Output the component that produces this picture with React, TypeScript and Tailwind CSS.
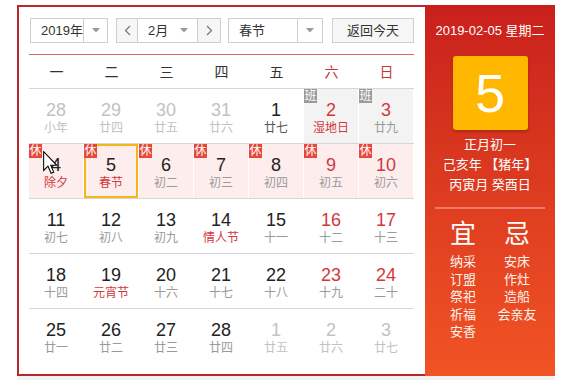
import React from "react";

const FONT = '"Liberation Sans","Noto Sans CJK SC",sans-serif';

type Cell = {
  d: number;
  l: string;
  other?: boolean;
  wk?: boolean;
  fest?: boolean;
  badge?: "休" | "班";
  sel?: boolean;
  darkLunar?: boolean;
  cursor?: boolean;
};

const rows: Cell[][] = [
  [
    { d: 28, l: "小年", other: true },
    { d: 29, l: "廿四", other: true },
    { d: 30, l: "廿五", other: true },
    { d: 31, l: "廿六", other: true },
    { d: 1, l: "廿七", darkLunar: true },
    { d: 2, l: "湿地日", wk: true, fest: true, badge: "班" },
    { d: 3, l: "廿九", wk: true, badge: "班" },
  ],
  [
    { d: 4, l: "除夕", fest: true, badge: "休", cursor: true },
    { d: 5, l: "春节", fest: true, badge: "休", sel: true },
    { d: 6, l: "初二", badge: "休" },
    { d: 7, l: "初三", badge: "休" },
    { d: 8, l: "初四", badge: "休" },
    { d: 9, l: "初五", wk: true, badge: "休" },
    { d: 10, l: "初六", wk: true, badge: "休" },
  ],
  [
    { d: 11, l: "初七" },
    { d: 12, l: "初八" },
    { d: 13, l: "初九" },
    { d: 14, l: "情人节", fest: true },
    { d: 15, l: "十一" },
    { d: 16, l: "十二", wk: true },
    { d: 17, l: "十三", wk: true },
  ],
  [
    { d: 18, l: "十四" },
    { d: 19, l: "元宵节", fest: true },
    { d: 20, l: "十六" },
    { d: 21, l: "十七" },
    { d: 22, l: "十八" },
    { d: 23, l: "十九", wk: true },
    { d: 24, l: "二十", wk: true },
  ],
  [
    { d: 25, l: "廿一" },
    { d: 26, l: "廿二" },
    { d: 27, l: "廿三" },
    { d: 28, l: "廿四" },
    { d: 1, l: "廿五", other: true },
    { d: 2, l: "廿六", other: true },
    { d: 3, l: "廿七", other: true },
  ],
];

function Tri() {
  return (
    <svg width="8" height="5" viewBox="0 0 8 5">
      <path d="M0 0 L8 0 L4 4.5 Z" fill="#9a9a9a" />
    </svg>
  );
}

function Chev({ dir }: { dir: "l" | "r" }) {
  return (
    <svg width="7" height="11" viewBox="0 0 7 11">
      <polyline
        points={dir === "l" ? "6,1 1.5,5.5 6,10" : "1,1 5.5,5.5 1,10"}
        fill="none"
        stroke="#777"
        strokeWidth="1.2"
      />
    </svg>
  );
}

function Cursor() {
  return (
    <svg width="15" height="24" viewBox="0 0 13 21" className="absolute left-[14px] top-[7px]">
      <path
        d="M0.5 0.5 L0.5 17 L4.3 13.3 L7 19.5 L9.3 18.5 L6.7 12.5 L12 12.5 Z"
        fill="#fff"
        stroke="#000"
        strokeWidth="0.9"
        strokeLinejoin="miter"
      />
    </svg>
  );
}

function DayCell({ c, rowPink }: { c: Cell; rowPink: boolean }) {
  let bg = "bg-white";
  if (c.badge === "班") bg = "bg-[#f3f3f3]";
  if (rowPink) bg = "bg-[#fdeded]";
  const numColor = c.other
    ? "text-[#c2c2c2]"
    : c.wk
    ? "text-[#d2373c]"
    : "text-[#222]";
  const lunarColor = c.other
    ? "text-[#c2c2c2]"
    : c.fest
    ? "text-[#d2373c]"
    : c.darkLunar
    ? "text-[#555]"
    : "text-[#9a9a9a]";
  return (
    <div className="h-full pr-[1px]">
      <div
        className={`relative h-full box-border ${bg} ${
          c.sel ? "border-2 border-[#f4b718]" : ""
        }`}
      >
        <div
          className={`flex flex-col items-center ${
            c.sel ? "pt-[9px]" : "pt-[11px]"
          }`}
        >
          <div className={`text-[18px] leading-[20px] ${numColor}`}>{c.d}</div>
          <div className={`text-[12px] leading-[16px] ${lunarColor}`}>{c.l}</div>
        </div>
        {c.badge && (
          <div
            className={`absolute ${c.sel ? "-left-[2px] -top-[2px]" : "left-0 top-0"} w-[13px] h-[14px] flex items-center justify-center text-[12px] leading-[14px] text-white ${
              c.badge === "休" ? "bg-[#e8473b]" : "bg-[#9b9b9b]"
            }`}
          >
            {c.badge}
          </div>
        )}
        {c.cursor && <Cursor />}
      </div>
    </div>
  );
}

export default function App() {
  const weekdays = ["一", "二", "三", "四", "五", "六", "日"];
  return (
    <div
      className="w-[563px] h-[380px] bg-white overflow-hidden"
      style={{ fontFamily: FONT }}
    >
      <div className="pt-[5px] pl-[17px]">
        <div className="flex w-[538px] h-[371px]">
          {/* left calendar */}
          <div className="w-[408px] h-full box-border border-l-2 border-t-2 border-b-2 border-[#b8282a] pt-[11px] pl-[10px]">
            {/* controls */}
            <div className="flex items-center h-[25px] text-[13px] text-[#333] pl-[1px]">
              <div className="flex h-[25px] w-[78px] box-border border border-[#cfcfcf] bg-white">
                <div className="flex-1 flex items-center pl-[10px] border-r border-[#cfcfcf]">
                  2019年
                </div>
                <div className="w-[23px] flex items-center justify-center">
                  <Tri />
                </div>
              </div>
              <div className="ml-[8px] flex h-[25px] w-[105px] box-border border border-[#cfcfcf]">
                <div className="w-[21px] flex items-center justify-center bg-[#f6f6f6] border-r border-[#cfcfcf]">
                  <Chev dir="l" />
                </div>
                <div className="w-[60px] flex items-center pl-[10px] pr-[9px] justify-between border-r border-[#cfcfcf] bg-white">
                  <span>2月</span>
                  <Tri />
                </div>
                <div className="flex-1 flex items-center justify-center bg-[#f6f6f6]">
                  <Chev dir="r" />
                </div>
              </div>
              <div className="ml-[7px] flex h-[25px] w-[95px] box-border border border-[#cfcfcf] bg-white">
                <div className="flex-1 flex items-center pl-[10px] border-r border-[#cfcfcf]">
                  春节
                </div>
                <div className="w-[24px] flex items-center justify-center">
                  <Tri />
                </div>
              </div>
              <div className="ml-[9px] h-[25px] w-[82px] box-border border border-[#cfcfcf] bg-[#f7f7f7] flex items-center justify-center text-[13px] text-[#333]">
                返回今天
              </div>
            </div>
            {/* divider */}
            <div className="mt-[11px] w-[385px] h-px bg-[#d9665c]" />
            {/* weekdays */}
            <div className="w-[385px] grid grid-cols-7 h-[34px] border-b border-[#d6d6d6] items-center">
              {weekdays.map((w, i) => (
                <div
                  key={w}
                  className={`text-center text-[14px] leading-[18px] ${
                    i >= 5 ? "text-[#c5383a]" : "text-[#333]"
                  }`}
                >
                  {w}
                </div>
              ))}
            </div>
            {/* days */}
            <div className="w-[385px]">
              {rows.map((r, ri) => (
                <div
                  key={ri}
                  className={`grid grid-cols-7 h-[55px] box-border ${
                    ri < 4 ? "border-b border-[#d6d6d6]" : ""
                  }`}
                >
                  {r.map((c, ci) => (
                    <DayCell key={ci} c={c} rowPink={ri === 1} />
                  ))}
                </div>
              ))}
            </div>
          </div>
          {/* right panel */}
          <div className="w-[130px] h-full bg-gradient-to-b from-[#c91f1c] to-[#f15324] text-white flex flex-col items-center">
            <div className="pt-[17px] text-[13px] leading-[18px]">2019-02-05 星期二</div>
            <div className="mt-[16px] w-[75px] h-[74px] rounded-[3px] bg-[#ffb700] shadow-[0_2px_3px_rgba(0,0,0,0.2)] flex items-center justify-center text-[54px] leading-none text-white">
              5
            </div>
            <div className="mt-[5px] text-[13px] leading-[20px] text-center">
              <div>正月初一</div>
              <div>己亥年 【猪年】</div>
              <div>丙寅月 癸酉日</div>
            </div>
            <div className="mt-[12px] w-[110px] h-[2px] bg-[#f07a6a]" />
            <div className="mt-[10px] grid grid-cols-[50px_50px] gap-x-[4px] w-[104px]">
              <div className="text-center text-[26px] leading-[30px]">宜</div>
              <div className="text-center text-[26px] leading-[30px]">忌</div>
              <div className="mt-[4px] text-center text-[13px] leading-[17.5px] text-[#fff3ee]">
                <div>纳采</div>
                <div>订盟</div>
                <div>祭祀</div>
                <div>祈福</div>
                <div>安香</div>
              </div>
              <div className="mt-[4px] text-center text-[13px] leading-[17.5px] text-[#fff3ee] whitespace-nowrap">
                <div>安床</div>
                <div>作灶</div>
                <div>造船</div>
                <div>会亲友</div>
              </div>
            </div>
          </div>
        </div>
        <div className="w-[538px] h-[4px] bg-[#f2f2f2]" />
      </div>
    </div>
  );
}
